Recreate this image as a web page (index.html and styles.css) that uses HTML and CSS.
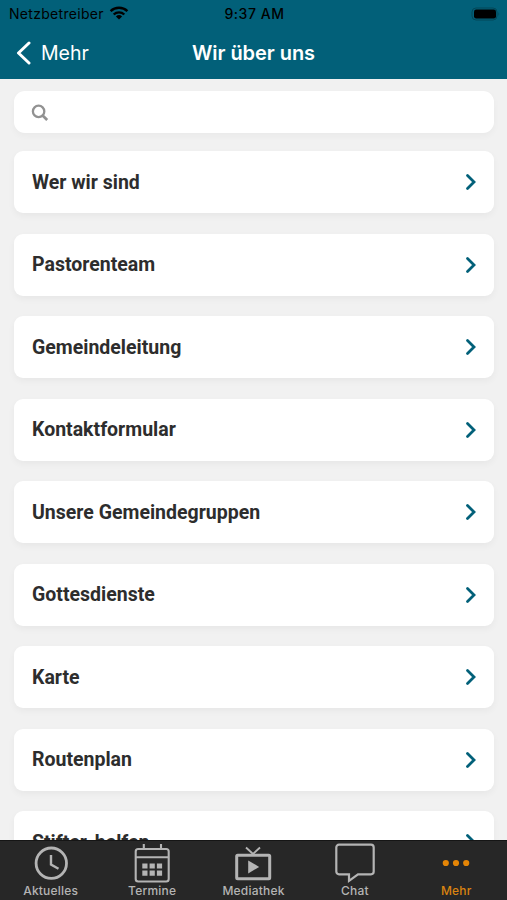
FILE: index.html
```html
<!DOCTYPE html>
<html lang="de">
<head>
  <meta charset="UTF-8">
  <meta name="viewport" content="width=device-width, initial-scale=1.0">
  <title>Wir über uns</title>
  <link rel="stylesheet" href="styles.css">
</head>
<body>
  <header>
    <div class="status">
      <div class="carrier">
        <span>Netzbetreiber</span>
        <svg width="20" height="14" viewBox="0 0 20 14" fill="none" stroke="#000" stroke-width="2.4">
          <path d="M1.6 5.2a12 12 0 0 1 16.8 0"/>
          <path d="M4.7 8.5a7.6 7.6 0 0 1 10.6 0"/>
          <path d="M10 13.4l-3.1-3a4.5 4.5 0 0 1 6.2 0z" fill="#000" stroke="none"/>
        </svg>
      </div>
      <div class="time">9:37 AM</div>
      <div class="battery">
        <svg width="29" height="14" viewBox="0 0 29 14">
          <rect x="1" y="1" width="25" height="12" rx="4" fill="none" stroke="#034758"/>
          <path d="M27.5 5q1.5 2 0 4z" fill="#034758"/>
          <rect x="3" y="2.5" width="22" height="9" rx="2.2"/>
        </svg>
      </div>
    </div>
    <div class="navbar">
      <a class="back">
        <svg width="16" height="24" viewBox="0 0 16 24" fill="none" stroke="#fff" stroke-width="3" stroke-linecap="round" stroke-linejoin="round">
          <path d="M14 2L3.5 12L14 22"/>
        </svg>
        <span>Mehr</span>
      </a>
      <h1>Wir über uns</h1>
    </div>
  </header>

  <main>
    <div class="search">
      <svg width="18" height="18" viewBox="0 0 18 18" fill="none" stroke="#929292" stroke-width="2.3">
        <circle cx="7.6" cy="7.4" r="5.7"/>
        <path d="M11.6 11.5l4.6 4.4" stroke-width="2.8"/>
      </svg>
    </div>
    <div class="item"><span>Wer wir sind</span><svg class="arrow" viewBox="0 0 12 18"><path d="M2.5 2.5l6.5 6.5l-6.5 6.5"/></svg></div>
    <div class="item"><span>Pastorenteam</span><svg class="arrow" viewBox="0 0 12 18"><path d="M2.5 2.5l6.5 6.5l-6.5 6.5"/></svg></div>
    <div class="item"><span>Gemeindeleitung</span><svg class="arrow" viewBox="0 0 12 18"><path d="M2.5 2.5l6.5 6.5l-6.5 6.5"/></svg></div>
    <div class="item"><span>Kontaktformular</span><svg class="arrow" viewBox="0 0 12 18"><path d="M2.5 2.5l6.5 6.5l-6.5 6.5"/></svg></div>
    <div class="item"><span>Unsere Gemeindegruppen</span><svg class="arrow" viewBox="0 0 12 18"><path d="M2.5 2.5l6.5 6.5l-6.5 6.5"/></svg></div>
    <div class="item"><span>Gottesdienste</span><svg class="arrow" viewBox="0 0 12 18"><path d="M2.5 2.5l6.5 6.5l-6.5 6.5"/></svg></div>
    <div class="item"><span>Karte</span><svg class="arrow" viewBox="0 0 12 18"><path d="M2.5 2.5l6.5 6.5l-6.5 6.5"/></svg></div>
    <div class="item"><span>Routenplan</span><svg class="arrow" viewBox="0 0 12 18"><path d="M2.5 2.5l6.5 6.5l-6.5 6.5"/></svg></div>
    <div class="item"><span>Stifter-helfen</span><svg class="arrow" viewBox="0 0 12 18"><path d="M2.5 2.5l6.5 6.5l-6.5 6.5"/></svg></div>
  </main>

  <nav class="tabs">
    <a class="tab">
      <svg width="40" height="41" viewBox="0 0 40 41" fill="none" stroke="#b4b4b4" stroke-width="2.8">
        <circle cx="20.3" cy="21.2" r="15.2"/>
        <path d="M20 13v9.5l7.5 4.2" stroke-width="2.4"/>
      </svg>
      <span>Aktuelles</span>
    </a>
    <a class="tab">
      <svg width="40" height="41" viewBox="0 0 40 41" fill="none" stroke="#b4b4b4" stroke-width="2.1">
        <rect x="3.7" y="7" width="33" height="32.5" rx="2.5"/>
        <path d="M4 15.3h32.5M11.8 2v5M29 2v5"/>
        <path d="M10.3 24h5.2M17.6 24h5.2M24.9 24h5.2M10.3 31.2h5.2M17.6 31.2h5.2M24.9 31.2h5.2" stroke-width="5.2"/>
      </svg>
      <span>Termine</span>
    </a>
    <a class="tab">
      <svg width="40" height="41" viewBox="0 0 40 41" fill="none" stroke="#b4b4b4" stroke-width="3">
        <rect x="3.7" y="13.2" width="33" height="23.5" rx="1"/>
        <path d="M13 5.5l7 6.5l7-6.5" stroke-width="1.9"/>
        <path d="M15.2 18.4v13l11-6.5z" fill="#b4b4b4" stroke="none"/>
      </svg>
      <span>Mediathek</span>
    </a>
    <a class="tab">
      <svg width="40" height="41" viewBox="0 0 40 41" fill="none" stroke="#b4b4b4" stroke-width="2.2">
        <path d="M4 2.7h32a2.7 2.7 0 0 1 2.7 2.7v24.2a2.7 2.7 0 0 1-2.7 2.7H23l-9 6.5v-6.5H4a2.7 2.7 0 0 1-2.7-2.7V5.4A2.7 2.7 0 0 1 4 2.7z"/>
      </svg>
      <span>Chat</span>
    </a>
    <a class="tab active">
      <svg width="40" height="41" viewBox="0 0 40 41" fill="#e48506">
        <circle cx="9.8" cy="21" r="3.1"/>
        <circle cx="20" cy="21" r="3.1"/>
        <circle cx="30.2" cy="21" r="3.1"/>
      </svg>
      <span>Mehr</span>
    </a>
  </nav>
</body>
</html>
```

FILE: styles.css
```css
* { box-sizing: border-box; margin: 0; padding: 0; }
body {
  display: flex;
  flex-direction: column;
  height: 900px;
  overflow: hidden;
  background: #f1f1f1;
  font-family: Roboto, sans-serif;
  color: #2d2d2d;
}
header {
  flex: none;
  height: 79px;
  background: #026079;
  color: #fff;
}
.status {
  display: grid;
  grid-template-columns: 1fr auto 1fr;
  align-items: center;
  height: 27px;
  padding: 0 7px 0 9px;
  font: 500 14px/28px Inter, sans-serif;
  color: #000;
}
.carrier {
  display: flex;
  align-items: center;
  gap: 5px;
  font-weight: 400;
  letter-spacing: 0.3px;
}
.carrier svg { margin-top: -2px; }
.time { letter-spacing: 0.55px; }
.battery {
  display: flex;
  justify-content: flex-end;
  padding-bottom: 1px;
}
.navbar {
  display: grid;
  grid-template-columns: 1fr auto 1fr;
  align-items: center;
  height: 51px;
  padding: 0 15px 0 15px;
  font-family: Inter, sans-serif;
}
.back {
  display: flex;
  align-items: center;
  gap: 10px;
  font-size: 19.5px;
}
h1 {
  font-size: 20px;
  font-weight: 600;
  letter-spacing: -0.05px;
}
main {
  flex: 1;
  min-height: 0;
  overflow: hidden;
  padding: 12px 13px 0 14px;
}
.search {
  display: flex;
  align-items: center;
  height: 42px;
  margin-bottom: 18.2px;
  padding: 2px 17px 0;
  background: #fff;
  border-radius: 11px;
  box-shadow: 0 3px 7px rgba(0,0,0,0.035);
}
.item {
  display: flex;
  align-items: center;
  justify-content: space-between;
  height: 62px;
  margin-bottom: 20.5px;
  padding: 0 17px 0 18px;
  background: #fff;
  border-radius: 9px;
  box-shadow: 0 3px 7px rgba(0,0,0,0.045);
  font-size: 19.5px;
  font-weight: 700;
}
.arrow {
  width: 12px;
  height: 18px;
  fill: none;
  stroke: #026079;
  stroke-width: 2.8;
  stroke-linecap: round;
}
.tabs {
  flex: none;
  display: grid;
  grid-template-columns: repeat(5, 1fr);
  height: 60px;
  background: #272727;
  border-top: 1px solid #151515;
}
.tab {
  display: flex;
  flex-direction: column;
  align-items: center;
  padding-top: 1px;
  font: 500 12px/15px Inter, sans-serif;
  letter-spacing: 0.2px;
  color: #b4b4b4;
}
.active { color: #d98310; }
```
